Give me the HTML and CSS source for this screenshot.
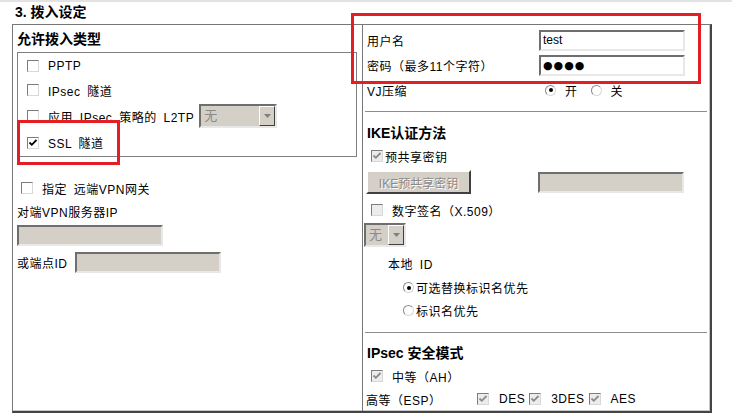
FILE: index.html
```html
<!DOCTYPE html>
<html lang="zh-CN">
<head>
    <meta charset="UTF-8">
    <meta name="viewport" content="width=device-width, initial-scale=1.0">
    <title>拨入设定</title>
    <link rel="stylesheet" href="styles.css">
</head>
<body>
    <div class="page">
        <div class="topline"></div>
        <h2 class="title">3. 拨入设定</h2>

        <div class="panel">
            <!-- left column: allowed dial-in types -->
            <div class="col left">
                <h3 class="head">允许拨入类型</h3>
                <div class="typebox">
                    <div class="trow r1"><span class="cb"></span>PPTP</div>
                    <div class="trow r2"><span class="cb"></span>IPsec 隧道</div>
                    <div class="trow r3"><span class="cb"></span>应用 IPsec 策略的 L2TP
                        <span class="sel wide"><span class="sel-val">无</span><span class="sel-btn"><svg width="7" height="4" viewBox="0 0 7 4"><path d="M0 0H7L3.5 4Z" fill="#808080"/></svg></span></span>
                    </div>
                    <div class="trow r4"><span class="cb"><svg width="10" height="10" viewBox="0 0 10 10"><path d="M1.5 4.5L3.8 6.8L8.5 2" stroke="#000" stroke-width="1.8" fill="none"/></svg></span>SSL 隧道</div>
                </div>

                <div class="gw"><span class="cb"></span>指定 远端VPN网关</div>
                <div class="lbl">对端VPN服务器IP</div>
                <input class="txt off ip" type="text" disabled>
                <div class="peer">或端点ID <input class="txt off ip" type="text" disabled></div>
            </div>

            <!-- right column: account, IKE, IPsec -->
            <div class="col right">
                <div class="frow f1"><span class="flbl">用户名</span><input class="txt" type="text" value="test"></div>
                <div class="frow f2"><span class="flbl">密码（最多11个字符）</span><input class="txt dots" type="text" value="●●●●"></div>
                <div class="frow f3"><span class="flbl">VJ压缩</span>
                    <span class="radios"><span class="rd on"></span>开<span class="rd gap"></span>关</span>
                </div>
                <div class="rule r-ike"></div>

                <h3 class="head sub ike">IKE认证方法</h3>
                <div class="line psk"><span class="cb dis tight"><svg width="10" height="10" viewBox="0 0 10 10"><path d="M1.5 4.5L3.8 6.8L8.5 2" stroke="#8a8a8a" stroke-width="1.8" fill="none"/></svg></span>预共享密钥</div>
                <div class="line keyrow"><button class="btn" disabled>IKE预共享密钥</button><input class="txt off key" type="text" disabled></div>
                <div class="line sign"><span class="cb dis"></span>数字签名（X.509）</div>
                <div class="line selrow"><span class="sel small"><span class="sel-val">无</span><span class="sel-btn"><svg width="7" height="4" viewBox="0 0 7 4"><path d="M0 0H7L3.5 4Z" fill="#808080"/></svg></span></span></div>
                <div class="line local">本地 ID</div>
                <div class="line opt o1"><span class="rd on small-gap"></span>可选替换标识名优先</div>
                <div class="line opt o2"><span class="rd small-gap"></span>标识名优先</div>
                <div class="rule r-ipsec"></div>

                <h3 class="head sub ipsec">IPsec 安全模式</h3>
                <div class="line ah"><span class="cb dis"><svg width="10" height="10" viewBox="0 0 10 10"><path d="M1.5 4.5L3.8 6.8L8.5 2" stroke="#8a8a8a" stroke-width="1.8" fill="none"/></svg></span>中等（AH）</div>
                <div class="line esp"><span class="esp-lbl">高等（ESP）</span>
                    <span class="cb dis"><svg width="10" height="10" viewBox="0 0 10 10"><path d="M1.5 4.5L3.8 6.8L8.5 2" stroke="#8a8a8a" stroke-width="1.8" fill="none"/></svg></span><span class="alg">DES</span>
                    <span class="cb dis"><svg width="10" height="10" viewBox="0 0 10 10"><path d="M1.5 4.5L3.8 6.8L8.5 2" stroke="#8a8a8a" stroke-width="1.8" fill="none"/></svg></span><span class="alg">3DES</span>
                    <span class="cb dis"><svg width="10" height="10" viewBox="0 0 10 10"><path d="M1.5 4.5L3.8 6.8L8.5 2" stroke="#8a8a8a" stroke-width="1.8" fill="none"/></svg></span><span class="alg">AES</span>
                </div>
            </div>
        </div>

        <!-- red highlight marks drawn over the form -->
        <div class="mark mark-user"></div>
        <div class="mark mark-ssl"></div>
    </div>
</body>
</html>
```

FILE: styles.css
```css
body {
    margin: 0;
    font-family: "Liberation Sans", "Noto Sans CJK SC", sans-serif;
    font-size: 12px;
    letter-spacing: 0.5px;
    word-spacing: 3px;
    color: #000;
    background: #fff;
}
.page {
    position: relative;
    width: 732px;
    height: 419px;
}
.topline {
    height: 2px;
    background: #e2e2e2;
}
.title {
    margin: 1px 0 2px 15px;
    font-size: 14px;
    line-height: 19px;
    font-weight: bold;
    letter-spacing: 0;
    word-spacing: 0;
}
.panel {
    display: grid;
    grid-template-columns: 349px 1fr;
    width: 700px;
    height: 389px;
    margin-left: 12px;
    box-sizing: border-box;
    border: 1px solid #777;
    border-right: 2px solid #444;
    border-bottom: 2px solid #444;
    box-shadow: inset -1px -1px #c8c8c8;
}
.col {
    box-sizing: border-box;
}
.left {
    padding: 5px 4px 0 4px;
}
.right {
    border-left: 1px solid #777;
    padding: 3px 3px 0 4px;
}
.head {
    margin: 0 0 4px 0;
    font-size: 14px;
    line-height: 18px;
    font-weight: bold;
    letter-spacing: 0;
    word-spacing: 0;
}

/* checkbox / radio look of the old windows controls */
.cb {
    display: inline-flex;
    align-items: center;
    justify-content: center;
    width: 12px;
    height: 12px;
    box-sizing: border-box;
    border: 1px solid;
    border-color: #7c7c7c #d8d8d8 #d8d8d8 #7c7c7c;
    background: #fff;
    margin-right: 9px;
    flex: none;
}
.cb.dis {
    background: #ececec;
}
.cb.tight {
    margin-right: 2px;
}
.rd {
    display: inline-flex;
    align-items: center;
    justify-content: center;
    width: 11px;
    height: 11px;
    box-sizing: border-box;
    border-radius: 50%;
    border: 1px solid;
    border-color: #8a8a8a #d8d8d8 #d8d8d8 #8a8a8a;
    background: #fff;
    margin-right: 9px;
    flex: none;
}
.rd.on::after {
    content: "";
    width: 4px;
    height: 4px;
    border-radius: 50%;
    background: #000;
}
.rd.small-gap {
    margin-right: 2px;
}

/* inputs */
.txt {
    width: 146px;
    height: 21px;
    box-sizing: border-box;
    padding: 0 2px;
    font-family: Tahoma, "Liberation Sans", sans-serif;
    font-size: 12px;
    letter-spacing: 0;
    color: #000;
    background: #fff;
    border: 2px solid;
    border-color: #6e6e6e #e8e8e8 #e8e8e8 #6e6e6e;
    outline: none;
}
.txt.off {
    background: #d4d0c8;
}
.txt.dots {
    font-family: "DejaVu Sans", sans-serif;
    font-size: 11px;
    letter-spacing: 1px;
}
.sel {
    display: inline-flex;
    height: 24px;
    box-sizing: border-box;
    border: 2px solid;
    border-color: #6e6e6e #e8e8e8 #e8e8e8 #6e6e6e;
    background: #d4d0c8;
    color: #8a8a8a;
    font-size: 13px;
}
.sel.wide {
    width: 78px;
    margin-left: 5px;
}
.sel.small {
    width: 42px;
}
.sel-val {
    flex: 1;
    padding-left: 3px;
    line-height: 20px;
}
.sel-btn {
    width: 16px;
    display: flex;
    align-items: center;
    justify-content: center;
    box-sizing: border-box;
    border: 1px solid;
    border-color: #fff #404040 #404040 #fff;
    background: #d4d0c8;
}
.btn {
    width: 105px;
    height: 24px;
    padding: 0;
    font-family: "Liberation Sans", "Noto Sans CJK SC", sans-serif;
    font-size: 12px;
    color: #8a8a8a;
    text-shadow: 1px 1px #fff;
    background: #d4d0c8;
    border: 2px solid;
    border-color: #fff #404040 #404040 #fff;
}

/* left column rows */
.typebox {
    width: 340px;
    box-sizing: border-box;
    border: 1px solid #7f7f7f;
    padding: 1px 0 1px 9px;
}
.trow {
    display: flex;
    align-items: center;
    height: 24px;
}
.trow.r3 {
    height: 28px;
}
.trow.r4 {
    height: 25px;
}
.gw {
    display: flex;
    align-items: center;
    height: 22px;
    margin-top: 20px;
    padding-left: 4px;
}
.lbl {
    margin-top: 3px;
    line-height: 22px;
}
.ip {
    display: block;
    margin-top: 1px;
}
.peer {
    display: flex;
    align-items: center;
    gap: 7px;
    margin-top: 5px;
}

/* right column rows */
.frow {
    display: flex;
    align-items: center;
}
.flbl {
    width: 172px;
    flex: none;
}
.f1 { height: 24px; }
.f2 { height: 26px; }
.f3 { height: 24px; }
.radios {
    display: flex;
    align-items: center;
    padding-left: 6px;
}
.rd.gap {
    margin-left: 13px;
}
.rule {
    margin: 9px 0 0 -2px;
    border-top: 1px solid #8c8c8c;
}
.head.sub {
    margin: 12px 0 0 0;
}
.line {
    display: flex;
    align-items: center;
}
.psk {
    height: 20px;
    margin-top: 4px;
    padding-left: 4px;
}
.keyrow {
    height: 24px;
    margin-top: 4px;
    margin-left: -1px;
    gap: 67px;
}
.sign {
    height: 20px;
    margin-top: 6px;
    padding-left: 4px;
}
.selrow {
    height: 24px;
    margin-top: 3px;
    margin-left: -3px;
}
.local {
    height: 18px;
    margin-top: 7px;
    padding-left: 21px;
}
.opt {
    height: 23px;
    padding-left: 36px;
}
.o1 {
    margin-top: 4px;
}
.r-ipsec {
    margin-top: 10px;
}
.head.ipsec {
    margin-top: 11px;
}
.ah {
    height: 20px;
    margin-top: 4px;
    padding-left: 4px;
}
.esp {
    height: 20px;
    margin-top: 3px;
    margin-left: -1px;
}
.esp-lbl {
    width: 111px;
    flex: none;
}
.alg {
    margin-right: 4px;
}
.esp .cb {
    margin-right: 10px;
}

.mark {
    position: absolute;
    box-sizing: border-box;
    border: 3px solid #e31e24;
}
.mark-user {
    left: 351px;
    top: 13px;
    width: 350px;
    height: 71px;
}
.mark-ssl {
    left: 17px;
    top: 120px;
    width: 103px;
    height: 45px;
}
```
